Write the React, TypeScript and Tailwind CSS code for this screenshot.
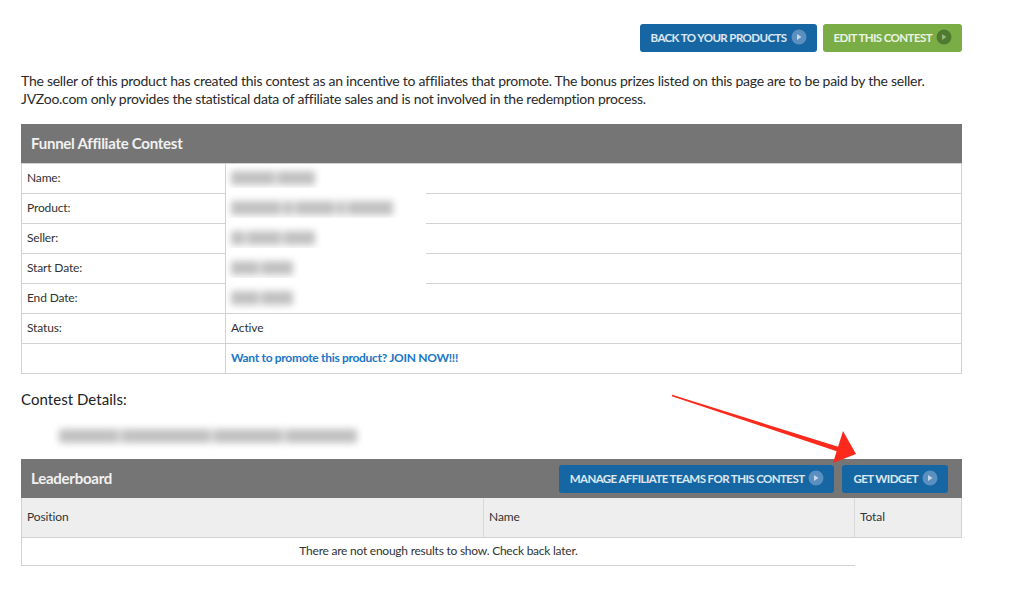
import React from 'react';

const PlayDot = ({ green }: { green?: boolean }) => (
    <svg width="16" height="16" viewBox="0 0 16 16" className="shrink-0 -translate-y-px">
        <circle cx="8" cy="8" r="7.5" fill={green ? '#4f7a30' : '#5a8fc0'} />
        <path d="M6 5l4.5 3L6 11z" fill={green ? '#93b877' : '#c6d8ea'} />
    </svg>
);

const ActionButton = ({ label, green }: { label: string; green?: boolean }) => (
    <button
        type="button"
        className={`flex h-[28px] items-center gap-[4px] rounded-[3px] pl-[11px] pr-[10px] text-[11.5px] font-bold tracking-[-0.58px] text-white/85 ${green ? 'bg-[#7bad47]' : 'bg-[#1566a3]'}`}
    >
        {label}
        <PlayDot green={green} />
    </button>
);

const Smudge = ({ parts }: { parts: number[] }) => (
    <div className="flex h-[14px] gap-[2px] opacity-55 blur-[3.5px]">
        {parts.map((w, i) => (
            <span key={i} className="block h-full bg-[#8f8f8f]" style={{ width: w }} />
        ))}
    </div>
);

const rows = [
    { label: 'Name:', parts: [44, 38], patched: true },
    { label: 'Product:', parts: [50, 10, 40, 8, 46], patched: true },
    { label: 'Seller:', parts: [14, 34, 32], patched: true },
    { label: 'Start Date:', parts: [28, 32], patched: true },
    { label: 'End Date:', parts: [28, 32], patched: false },
];

export default function App() {
    return (
        <div className="relative h-[592px] w-[1024px] overflow-hidden bg-white pl-[21px] font-['Lato','Open_Sans',sans-serif] text-[#333]">
            <div className="w-[941px]">
                <div className="flex justify-end gap-[6px] pt-[24px]">
                    <ActionButton label="BACK TO YOUR PRODUCTS" />
                    <ActionButton label="EDIT THIS CONTEST" green />
                </div>

                <p className="mt-[20px] text-[14px] leading-[18px] tracking-[-0.26px] text-[#2a2a2a]">
                    The seller of this product has created this contest as an incentive to affiliates that promote. The bonus prizes listed on this page are to be paid by the seller. JVZoo.com only provides the statistical data of affiliate sales and is not involved in the redemption process.
                </p>

                <div className="mt-[16px] border-x border-b border-[#d2d2d2]">
                    <div className="-mx-px flex h-[40px] items-center border-b border-[#d2d2d2] bg-[#757575] bg-clip-padding px-[10px] text-[15px] font-bold tracking-[-0.25px] text-white/90">
                        Funnel Affiliate Contest
                    </div>
                    {rows.map(row => (
                        <div key={row.label} className="flex h-[30px] border-b border-[#d2d2d2] text-[12px] tracking-[-0.15px]">
                            <div className="flex w-[204px] items-center border-r border-[#d2d2d2] px-[5px] pb-px">{row.label}</div>
                            <div className="relative flex flex-1 items-center px-[5px] pb-px">
                                <Smudge parts={row.parts} />
                                {row.patched && <div className="absolute -bottom-[5px] left-0 h-[10px] w-[200px] bg-white" />}
                            </div>
                        </div>
                    ))}
                    <div className="flex h-[30px] border-b border-[#d2d2d2] text-[12px] tracking-[-0.15px]">
                        <div className="flex w-[204px] items-center border-r border-[#d2d2d2] px-[5px] pb-px">Status:</div>
                        <div className="flex flex-1 items-center px-[5px] pb-px">Active</div>
                    </div>
                    <div className="flex h-[29px] text-[12px]">
                        <div className="w-[204px] border-r border-[#d2d2d2]" />
                        <a href="#" className="flex flex-1 items-center px-[5px] pb-px font-bold tracking-[-0.3px] text-[#1a76c9]">Want to promote this product? JOIN NOW!!!</a>
                    </div>
                </div>

                <h2 className="mt-[15px] text-[15px] leading-[20px] tracking-[0.05px] text-[#222]">Contest Details:</h2>

                <div className="ml-[38px] mt-[20px] flex h-[14px] gap-[2px] opacity-55 blur-[3.5px]">
                    <span className="block h-full w-[60px] bg-[#8f8f8f]" />
                    <span className="block h-full w-[90px] bg-[#8f8f8f]" />
                    <span className="block h-full w-[70px] bg-[#8f8f8f]" />
                    <span className="block h-full w-[72px] bg-[#8f8f8f]" />
                </div>

                <div className="mt-[16px]">
                    <div className="flex h-[39px] items-center justify-between bg-[#757575] pl-[10px] pr-[14px]">
                        <span className="text-[15px] font-bold tracking-[-0.25px] text-white/90">Leaderboard</span>
                        <div className="flex gap-[8px]">
                            <ActionButton label="MANAGE AFFILIATE TEAMS FOR THIS CONTEST" />
                            <ActionButton label="GET WIDGET" />
                        </div>
                    </div>
                    <div className="flex h-[40px] border-x border-b border-[#d2d2d2] bg-[#eeeeee] text-[12px] tracking-[-0.1px]">
                        <div className="flex w-[462px] items-center border-r border-[#d8d8d8] px-[5px] pb-px">Position</div>
                        <div className="flex w-[371px] items-center border-r border-[#d8d8d8] px-[5px] pb-px">Name</div>
                        <div className="flex flex-1 items-center px-[5px] pb-px">Total</div>
                    </div>
                    <div className="flex h-[28px] w-[834px] items-center justify-center border-b border-l border-[#d2d2d2] pb-px text-[12px] tracking-[-0.24px]">
                        There are not enough results to show. Check back later.
                    </div>
                </div>
            </div>

            <svg className="absolute left-0 top-0" width="1024" height="592" viewBox="0 0 1024 592" fill="none">
                <path d="M672 395.5L838 447.5L837 450.5Z" stroke="#fb2a1c" strokeWidth="1.5" fill="#fb2a1c" />
                <path d="M843 431L856 454L833 463Z" fill="#fb2a1c" />
            </svg>
        </div>
    );
}
